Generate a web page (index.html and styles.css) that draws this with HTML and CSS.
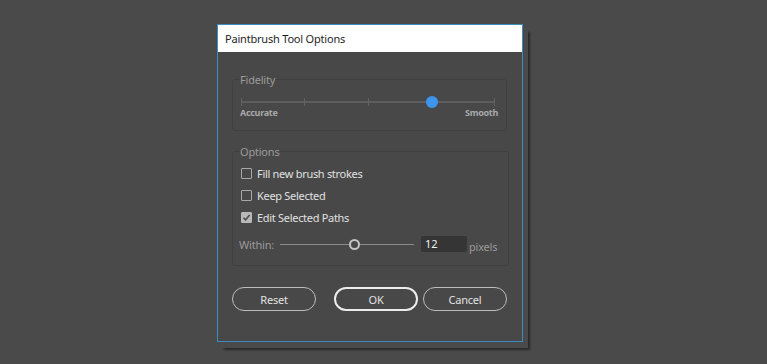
FILE: index.html
```html
<!DOCTYPE html>
<html lang="en">
<head>
  <meta charset="UTF-8">
  <title>Paintbrush Tool Options</title>
  <link rel="stylesheet" href="styles.css">
</head>
<body>
  <div class="stage">
    <div class="dialog">
      <div class="titlebar">Paintbrush Tool Options</div>
      <div class="dialog-body">
        <fieldset class="group fidelity">
          <legend>Fidelity</legend>
          <div class="track">
            <span class="tick"></span>
            <span class="tick"></span>
            <span class="tick"></span>
            <span class="tick"></span>
            <span class="tick"></span>
            <span class="knob" style="left: 75%;"></span>
          </div>
          <div class="track-labels">
            <span>Accurate</span>
            <span>Smooth</span>
          </div>
        </fieldset>

        <fieldset class="group options">
          <legend>Options</legend>
          <label class="check"><span class="box"></span>Fill new brush strokes</label>
          <label class="check"><span class="box"></span>Keep Selected</label>
          <label class="check"><span class="box checked">
            <svg width="9" height="9" viewBox="0 0 9 9"><path d="M1.5 4.8 L3.6 6.9 L7.6 2" fill="none" stroke="#4a4a4a" stroke-width="1.6"/></svg>
          </span>Edit Selected Paths</label>
          <div class="within">
            <span class="within-label">Within:</span>
            <div class="line-slider">
              <span class="ring" style="left: 55%;"></span>
            </div>
            <div class="num-input">12</div>
            <span class="unit">pixels</span>
          </div>
        </fieldset>

        <div class="buttons">
          <button class="btn">Reset</button>
          <div class="btn-pair">
            <button class="btn primary">OK</button>
            <button class="btn">Cancel</button>
          </div>
        </div>
      </div>
    </div>
  </div>
</body>
</html>
```

FILE: styles.css
```css
body {
  margin: 0;
  background-color: #4a4a4a;
  font-family: 'Noto Sans', 'Open Sans', sans-serif;
  height: 364px;
  overflow: hidden;
}

.stage {
  padding: 24px 0 0 217px;
}

.dialog {
  width: 304px;
  border: 1px solid #3b8cc2;
  background-color: #484848;
  box-shadow: 5px 6px 0 #4a4a4a, 7px 8px 2px rgba(0, 0, 0, 0.45);
}

.titlebar {
  height: 27px;
  line-height: 27px;
  background: #fff;
  color: #1e1e1e;
  font-size: 11px;
  letter-spacing: -0.2px;
  padding-left: 7px;
}

.dialog-body {
  padding: 20px 15px 30px 14px;
}

/* Group boxes */
.group {
  margin: 0;
  border: 1px solid #404040;
  border-radius: 3px;
  padding: 0 11px 0 8px;
}

.group legend {
  padding: 0;
  margin-left: -1px;
  font-size: 11px;
  line-height: 15px;
  letter-spacing: -0.2px;
  color: #9a9a9a;
}

.fidelity {
  padding-bottom: 12px;
}

.track {
  position: relative;
  height: 14px;
  margin-top: 8px;
  display: flex;
  justify-content: space-between;
  align-items: center;
  background: linear-gradient(#5e5e5e, #5e5e5e) center / 100% 2px no-repeat;
}

.tick {
  width: 1px;
  height: 8px;
  background: #626262;
}

.knob {
  position: absolute;
  top: 1px;
  width: 12px;
  height: 12px;
  margin-left: -6px;
  border-radius: 50%;
  background: #3d95ee;
}

.track-labels {
  display: flex;
  justify-content: space-between;
  margin: -2px -3px 0 -1px;
  font-size: 9px;
  line-height: 11px;
  font-weight: bold;
  letter-spacing: -0.3px;
  color: #a8a8a8;
}

/* Options */
.options {
  margin-top: 13px;
  padding-top: 3px;
  padding-bottom: 11px;
}

.check {
  display: flex;
  align-items: center;
  height: 22px;
  gap: 5px;
  font-size: 11px;
  letter-spacing: -0.3px;
  color: #e0e0e0;
}

.box {
  width: 9px;
  height: 9px;
  border: 1px solid #a8a8a8;
  border-radius: 1px;
  display: flex;
  align-items: center;
  justify-content: center;
}

.box.checked {
  background: #b8b8b8;
  border-color: #b8b8b8;
}

.within {
  display: flex;
  align-items: center;
  height: 20px;
  margin-top: 6px;
  margin-left: -2px;
}

.within-label {
  font-size: 11px;
  letter-spacing: -0.2px;
  color: #9a9a9a;
  width: 41px;
}

.line-slider {
  position: relative;
  width: 134px;
  height: 1px;
  background: #8a8a8a;
}

.ring {
  position: absolute;
  top: -5px;
  width: 7px;
  height: 7px;
  margin-left: -5px;
  border: 2px solid #c4c4c4;
  border-radius: 50%;
  background: #484848;
}

.num-input {
  width: 42px;
  height: 16px;
  margin-left: 7px;
  padding-left: 4px;
  background: #353535;
  border-radius: 2px;
  color: #f0f0f0;
  font-size: 11px;
  line-height: 16px;
}

.unit {
  align-self: flex-end;
  margin-left: 2px;
  font-size: 11px;
  line-height: 14px;
  letter-spacing: -0.2px;
  color: #9a9a9a;
}

/* Buttons */
.buttons {
  display: flex;
  justify-content: space-between;
  margin-top: 21px;
}

.btn-pair {
  display: flex;
  gap: 5px;
}

.btn {
  width: 84px;
  height: 24px;
  border: 1.5px solid #bdbdbd;
  border-radius: 12px;
  background: transparent;
  color: #e2e2e2;
  font-family: inherit;
  font-size: 11px;
  letter-spacing: -0.2px;
  padding: 0;
}

.btn.primary {
  border: 2px solid #ececec;
}
```
